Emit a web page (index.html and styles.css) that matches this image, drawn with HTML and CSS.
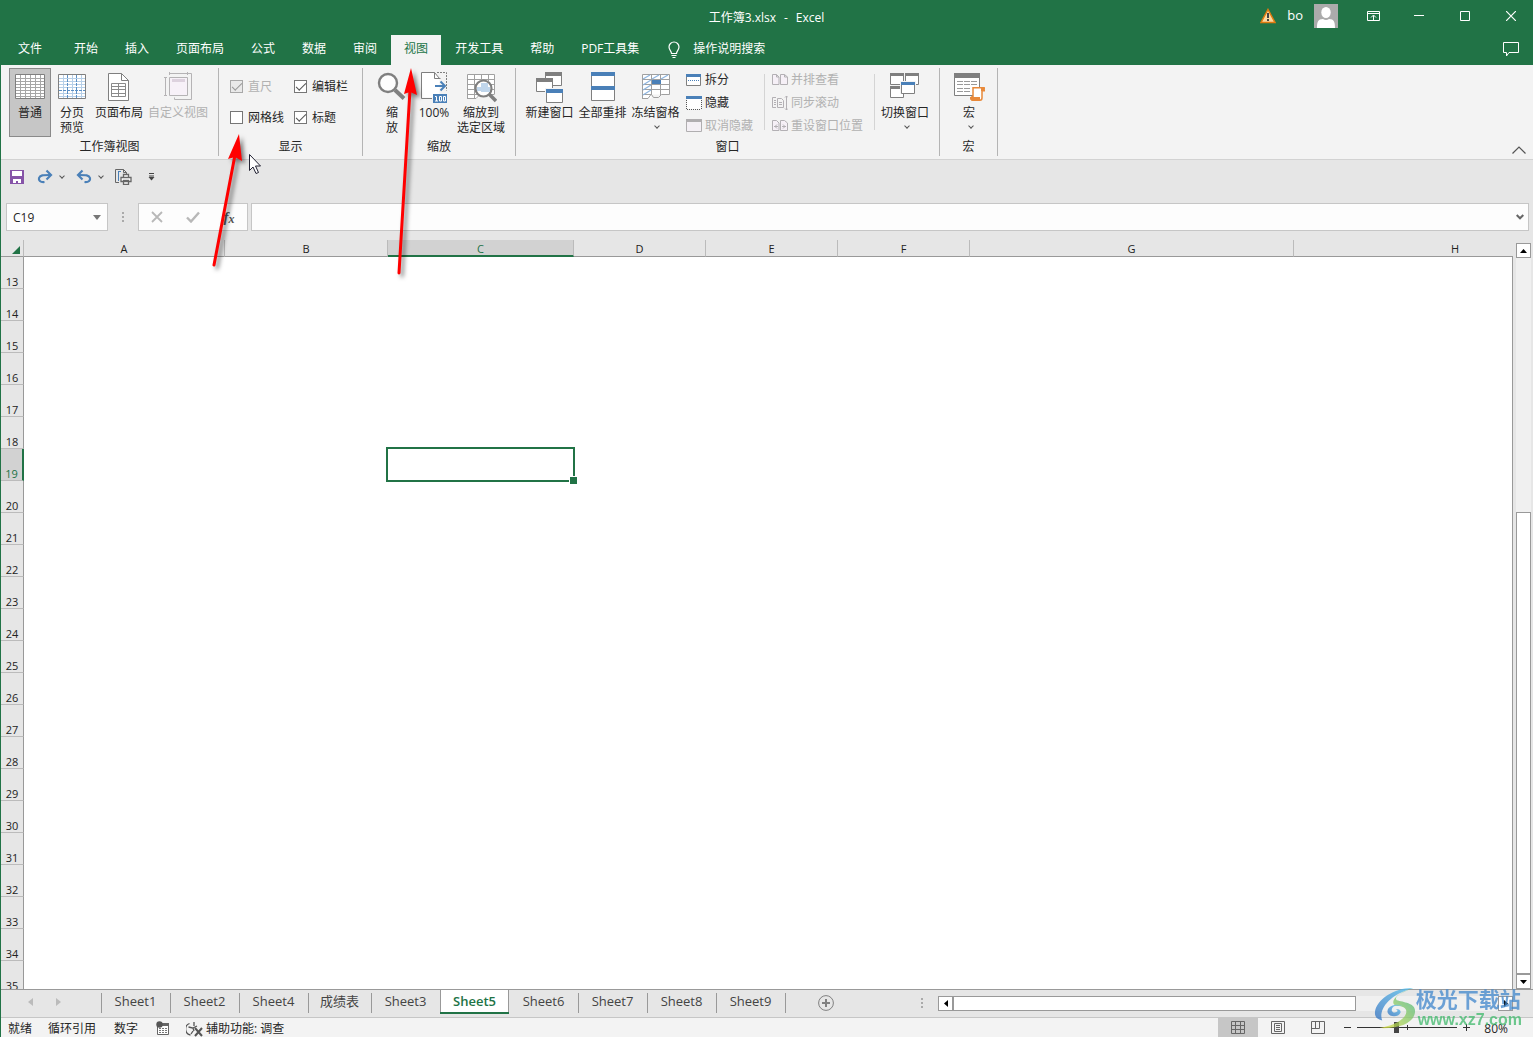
FILE: index.html
```html
<!DOCTYPE html>
<html lang="zh-CN">
<head>
<meta charset="utf-8">
<title>工作簿3.xlsx - Excel</title>
<link rel="stylesheet" href="styles.css">
</head>
<body>
<div class="app">
  <header class="header">
    <div class="titlebar">
      <h1 class="title"><span>工作簿3.xlsx</span><span>-</span><span>Excel</span></h1>
      <div class="account">
        <svg width="16" height="16" viewBox="0 0 16 16"><path d="M8 1.500 15 14.500H1Z" fill="#fbd9a0" stroke="#e07a10" stroke-width="1.500"/><path d="M8 5v5M8 11v2" stroke="#444" stroke-width="2"/></svg>
        <span class="user">bo</span>
        <svg width="24" height="24" viewBox="0 0 24 24"><path fill="#ababab" d="M0 0h24v24H0z"/><ellipse cx="12" cy="8.500" rx="4.700" ry="5.500" fill="#fff"/><path d="M3 24c0-6 1-9 6-9 2 1.300 4 1.300 6 0 5 0 6 3 6 9z" fill="#fff"/></svg>
      </div>
      <div class="winbuttons">
        <button class="winbtn" aria-label="功能区显示选项"><svg width="13" height="10" viewBox="0 0 13 10" fill="none" stroke="#fff"><path d="M.5.5h12v9H.5zM.5 2.500h12M6.500 9V4.500M4 6.500 6.500 4 9 6.500"/></svg></button>
        <button class="winbtn" aria-label="最小化"><svg width="10" height="10" viewBox="0 0 10 10" stroke="#fff"><path d="M0 4.500h10"/></svg></button>
        <button class="winbtn" aria-label="最大化"><svg width="10" height="10" viewBox="0 0 10 10" stroke="#fff" fill="none"><path d="M.5.5h9v9h-9z"/></svg></button>
        <button class="winbtn" aria-label="关闭"><svg width="10" height="10" viewBox="0 0 10 10" stroke="#fff" stroke-width="1.200"><path d="M0 0l10 10M10 0 0 10"/></svg></button>
      </div>
    </div>
    <nav class="tabs">
      <button class="tab tab-file">文件</button>
      <button class="tab">开始</button>
      <button class="tab">插入</button>
      <button class="tab">页面布局</button>
      <button class="tab">公式</button>
      <button class="tab">数据</button>
      <button class="tab">审阅</button>
      <button class="tab tab-active">视图</button>
      <button class="tab">开发工具</button>
      <button class="tab">帮助</button>
      <button class="tab">PDF工具集</button>
      <button class="tab tell-me"><svg width="16" height="18" viewBox="0 0 16 18" fill="none" stroke="#fff" stroke-width="1.200"><path d="M5.500 12.500c0-2.500-2.500-3.500-2.500-6.500a5 5 0 0 1 10 0c0 3-2.500 4-2.500 6.500zM5.500 14.500h5M6.500 16.500h3"/></svg>操作说明搜索</button>
      <button class="comment" aria-label="批注"><svg width="16" height="15" viewBox="0 0 16 15" fill="none" stroke="#fff"><path d="M.5.5h15v10H6L3.500 14v-3.500h-3z"/></svg></button>
    </nav>
  </header>

  <div class="body">
    <section class="ribbon" aria-label="视图">
      <div class="group group-views">
        <div class="controls">
          <button class="big pressed"><svg width="32" height="32" viewBox="0 0 32 32"><path d="M1.500 3.500h29v24h-29z" fill="#fff" stroke="#7f7f7f"/><path d="M2 7.500h28M2 10.500h28M2 13.500h28M2 16.500h28M2 19.500h28M2 22.500h28M2 25.500h28M6.500 4v23M11.500 4v23M16.500 4v23M21.500 4v23M26.500 4v23" stroke="#a6a6a6"/></svg><span>普通</span></button>
          <button class="big"><svg width="32" height="32" viewBox="0 0 32 32"><path d="M2.500 3.500h27v24h-27z" fill="#fff" stroke="#7f7f7f"/><path d="M3 7.500h26M3 10.500h26M3 13.500h26M3 16.500h26M3 22.500h26M3 25.500h26M7.500 4v23M16.500 4v23M25.500 4v23" stroke="#b6cfe8"/><path d="M11.500 4v23M20.500 4v23M3 19.500h26" stroke="#5b8fc4" stroke-dasharray="3 1"/></svg><span>分页<br>预览</span></button>
          <button class="big w-52"><svg width="32" height="32" viewBox="0 0 32 32"><path d="M5.500 2.500h13l7 7v20h-20z" fill="#fff" stroke="#7f7f7f"/><path d="M18.500 2.500v7h7" fill="none" stroke="#7f7f7f"/><path d="M8.500 12.500h14v13h-14zM8.500 15.500h14M8.500 18.500h14M8.500 22.500h14M15.500 12.500v13" fill="none" stroke="#8a8a8a"/></svg><span>页面布局</span></button>
          <button class="big w-66" disabled><svg width="32" height="32" viewBox="0 0 32 32" fill="none" stroke="#b5b3b5"><path d="M7.500 6.500h18v18h-18z" fill="#f7f1f8"/><path d="M10 8h13v3H10z" fill="#ddd2de" stroke="none"/><path d="M7.500 2.500h18M7.500 1v3M25.500 1v3M3.500 6.500v18M2 6.500h3M2 24.500h3M26 2.500h3.500v26H12.500v-2"/></svg><span>自定义视图</span></button>
        </div>
        <h2 class="group-name">工作簿视图</h2>
      </div>
      <div class="group group-show">
        <div class="controls checks">
          <label class="check off"><input type="checkbox" checked disabled>直尺</label>
          <label class="check"><input type="checkbox" checked>编辑栏</label>
          <label class="check"><input type="checkbox">网格线</label>
          <label class="check"><input type="checkbox" checked>标题</label>
        </div>
        <h2 class="group-name">显示</h2>
      </div>
      <div class="group group-zoom">
        <div class="controls">
          <button class="big"><svg width="32" height="32" viewBox="0 0 32 32" fill="none" stroke="#7f7f7f"><path d="m19 19 9 8.500" stroke-width="4"/><circle cx="12" cy="12" r="9" fill="#fdfdfd" stroke-width="2.400"/></svg><span>缩<br>放</span></button>
          <button class="big"><svg width="32" height="32" viewBox="0 0 32 32"><path d="M3.500 1.500h13l5 6v19h-18z" fill="#fff"/><path d="M14 27.500H3.500v-26h13l5 6M16.500 1.500v6h6" fill="none" stroke="#7f7f7f"/><path d="M19 1.500h9.500v18" fill="none" stroke="#7f7f7f" stroke-dasharray="2 1"/><path d="M17 15h10M22.500 10.500 27 15l-4.500 4.500" fill="none" stroke="#4a80b8" stroke-width="2"/><path d="M15 23h14v9H15z" fill="#4a80b8"/><path d="M17 25.500h1.500V30M17 30h3M21.500 25.500h2V30h-2zM25.500 25.500h2V30h-2z" fill="none" stroke="#fff"/></svg><span>100%</span></button>
          <button class="big w-52"><svg width="32" height="32" viewBox="0 0 32 32"><path d="M2.500 3.500h27v19l-10 3h-3l-5 2h-9z" fill="#fff"/><path d="M2.500 27V3.500h27V23M2 27.500h9l3-3M2.500 8.500h27M2.500 13.500h27M2.500 18.500h27M2.500 23.500h27M9.500 4v23M16.500 4v6M23.500 4v6" fill="none" stroke="#a0a0a0"/><path d="m24 23 7 7" stroke="#7f7f7f" stroke-width="3.500"/><circle cx="18.500" cy="17.500" r="8" fill="#fff" stroke="#7f7f7f" stroke-width="2.200"/><path d="M16 12h7v4h2v5h-9v-1h-4v-4h4z" fill="#c0d6ec"/></svg><span>缩放到<br>选定区域</span></button>
        </div>
        <h2 class="group-name">缩放</h2>
      </div>
      <div class="group group-window">
        <div class="controls">
          <button class="big w-53"><svg width="32" height="32" viewBox="0 0 32 32" fill="#fff" stroke="#7f7f7f"><path d="M11.500 1.500h16v13h-16z"/><path d="M11 1h17v4H11z" fill="#7f7f7f" stroke="none"/><path d="M2.500 7.500h16v13h-16z"/><path d="M2 7h17v4H2z" fill="#7f7f7f" stroke="none"/><path d="M11 17h19v15H11z" fill="#f3f3f3" stroke="none"/><path d="M12.500 18.500h16v13h-16z"/><path d="M12 18h17v4H12z" fill="#4a80b8" stroke="none"/></svg><span>新建窗口</span></button>
          <button class="big w-53"><svg width="32" height="32" viewBox="0 0 32 32"><path d="M4.500 1.500h23v28h-23z" fill="#fff" stroke="#7f7f7f"/><path d="M4 1h24v4H4zM4 15h24v4H4z" fill="#4a80b8"/></svg><span>全部重排</span></button>
          <button class="big w-53"><svg width="32" height="32" viewBox="0 0 32 32"><path d="M2.500 3.500h27v20h-18v4h-9z" fill="#fff"/><path d="M2.500 27V3.500h27V23.500h-8l-3 3h-5l-2-3H2M2 27.500h6l3-4M2.500 8.500h27M2.500 13.500h27M2.500 18.500h27M11.500 4v20M20.500 4v20" fill="none" stroke="#a0a0a0"/><path d="m3 8 7-4M12 8l7-4M21 8l7-4M3 14l8-5M3 19l8-5M3 24l8-5" stroke="#8fb6e0" stroke-width="1.300"/><path d="M12 9h9v4h-9z" fill="#4a80b8"/></svg><span>冻结窗格</span><i class="chev"></i></button>
          <div class="stack">
            <button class="small"><svg width="16" height="16" viewBox="0 0 16 16"><path d="M.5 2.500h14v11H.5z" fill="#fff" stroke="#7f7f7f"/><path d="M0 2h15v3H0z" fill="#4a80b8"/><path d="M2 8.500h11" stroke="#4a80b8" stroke-dasharray="1 1"/></svg>拆分</button>
            <button class="small"><svg width="16" height="16" viewBox="0 0 16 16"><path d="M1 2h14v12H1z" fill="#fff"/><path d="M1 14.500h14M.5 5v9M15.500 5v9" stroke="#555" stroke-dasharray="1 1"/><path d="M0 1h16v3H0z" fill="#4a80b8"/></svg>隐藏</button>
            <button class="small" disabled><svg width="16" height="16" viewBox="0 0 16 16"><path d="M.5 1.500h15v12H.5z" fill="#f4f0f5" stroke="#b0aeb0"/><path d="M0 1h16v3H0z" fill="#b0aeb0"/></svg>取消隐藏</button>
          </div>
          <div class="stack stack-sep">
            <button class="small" disabled><svg width="16" height="16" viewBox="0 0 16 16" fill="#f6f0f7" stroke="#b3b0b4"><path d="M.5 2.500h4l2.500 2.500v7.500H.5zM8.500 2.500h4l3 2.500v7.500h-7zM4.500 2.500V5H7M12.500 2.500V5h3"/></svg>并排查看</button>
            <button class="small" disabled><svg width="16" height="16" viewBox="0 0 16 16" fill="none" stroke="#b3b0b4"><path d="M4 2.500H.5v10H4M5.500 3.500h4l2 2v7h-6zM2 5.500h2M2 7.500h2M2 9.500h2M7 7.500h3M7 9.500h3M14.500 1v14M13 2.500l1.500-1.500L16 2.500M13 13.500l1.500 1.500 1.500-1.500"/></svg>同步滚动</button>
            <button class="small" disabled><svg width="16" height="16" viewBox="0 0 16 16" fill="#f6f0f7" stroke="#b3b0b4"><path d="M.5 2.500h4l2.500 2.500v7.500H.5zM8.500 2.500h4l3 2.500v7.500h-7zM2 8.500h4M5 6.500l-2 2 2 2M10 8.500h4M11 6.500l2 2-2 2"/></svg>重设窗口位置</button>
          </div>
          <button class="big w-60"><svg width="32" height="32" viewBox="0 0 32 32" fill="#fff" stroke="#7f7f7f"><path d="M1.500 2.500h13v11h-13zM16.500 2.500h13v11h-13zM1.500 15.500h13v11h-13z"/><path d="M1 2h14v3H1zM16 2h14v3H16zM1 15h14v3H1z" fill="#7f7f7f" stroke="none"/><path d="M11 10h16v13H11z" fill="#f3f3f3" stroke="none"/><path d="M12.500 11.500h13v11h-13z"/><path d="M12 11h14v3H12z" fill="#4a80b8" stroke="none"/></svg><span>切换窗口</span><i class="chev"></i></button>
        </div>
        <h2 class="group-name">窗口</h2>
      </div>
      <div class="group group-macro">
        <div class="controls">
          <button class="big"><svg width="32" height="32" viewBox="0 0 32 32"><path d="M1.500 2.500h25v22h-25z" fill="#fff" stroke="#7f7f7f"/><path d="M1 2h26v5H1z" fill="#7f7f7f"/><path d="M4 10.500h20M4 13.500h20M4 17.500h14M4 20.500h14" stroke="#9a9a9a" stroke-dasharray="6 1"/><path d="M20 16.700h10.500q1.500 0 1.500 1.500v1.500h-3v7q0 2.500-2 2.500h-8v-3.500h1z" fill="#fff" stroke="#e8893a" stroke-width="1.500"/><path d="M17 26h10v3H18q-1 0-1-1.500zM28 16h3l1 4h-4z" fill="#e8893a"/></svg><span>宏</span><i class="chev"></i></button>
        </div>
        <h2 class="group-name">宏</h2>
      </div>
      <button class="collapse" aria-label="折叠功能区"><svg width="14" height="8" viewBox="0 0 14 8" fill="none" stroke="#555" stroke-width="1.200"><path d="M.5 7.500 7 1l6.500 6.500"/></svg></button>
    </section>

    <div class="qat">
      <button class="qbtn" aria-label="保存"><svg width="16" height="16" viewBox="0 0 16 16"><path d="M1 1h14v14H1z" fill="#8654a8"/><path d="M3 2h10v5H3zM4 10h8v4H9v-2H7v2H4z" fill="#fff"/></svg></button>
      <button class="qbtn q-gap" aria-label="恢复"><svg width="16" height="16" viewBox="0 0 16 16" fill="none" stroke="#4a80b8" stroke-width="2.200"><path d="M7.500 13C3 13.500 1.500 11 2 9 3 6 6 6 13 6"/><path d="M9.500 1.500 14 6l-4.500 4.500"/></svg></button>
      <i class="chev"></i>
      <button class="qbtn q-gap" aria-label="撤消"><svg width="16" height="16" viewBox="0 0 16 16" fill="none" stroke="#4a80b8" stroke-width="2.200"><path d="M8.500 13c4.500.5 6-2 5.500-4C13 6 10 6 3 6"/><path d="M6.500 1.500 2 6l4.500 4.500"/></svg></button>
      <i class="chev"></i>
      <button class="qbtn q-gap" aria-label="打印预览"><svg width="17" height="16" viewBox="0 0 17 16" fill="none" stroke="#666"><path d="M4 13.500H.5V.5h8l3 3V6M8.500.5v3h3"/><path d="M3.500 3v9M3 2.500h3" stroke="#4a80b8"/><path d="M8.500 9V5.500h5V9M6 12.500v-4h10v4zM8.500 11.500h5v4h-5z" fill="#fff" stroke-width="1.300"/></svg></button>
      <button class="qbtn q-more" aria-label="自定义快速访问工具栏"><svg width="7" height="8" viewBox="0 0 7 8"><path d="M1 .5h5M1 3h5" stroke="#444"/><path d="M.5 4h6l-3 3.500z" fill="#444"/></svg></button>
    </div>

    <div class="formula">
      <div class="box namebox"><input type="text" value="C19" aria-label="名称框"><svg width="8" height="5" viewBox="0 0 8 5"><path d="M0 0h8L4 5z" fill="#777"/></svg></div>
      <span class="dots"></span>
      <div class="box fxbox">
        <button class="fbtn" aria-label="取消"><svg width="12" height="12" viewBox="0 0 12 12" stroke="#b8b8b8" stroke-width="1.800"><path d="m1 1 10 10M11 1 1 11"/></svg></button>
        <button class="fbtn" aria-label="输入"><svg width="14" height="12" viewBox="0 0 14 12" fill="none" stroke="#b8b8b8" stroke-width="2.400"><path d="m1 6.500 4 4 8-9"/></svg></button>
        <button class="fbtn fx" aria-label="插入函数"><em>f</em><em class="sub">x</em></button>
      </div>
      <div class="box fbox"><input type="text" aria-label="编辑栏"><svg width="8" height="6" viewBox="0 0 8 6" fill="none" stroke="#666" stroke-width="2"><path d="m.7 1 3.300 3.300L7.300 1"/></svg></div>
    </div>

    <main class="sheet">
      <div class="viewport">
        <table class="grid">
          <colgroup><col class="c-head"><col class="c-a"><col class="c-b"><col class="c-c"><col class="c-d"><col class="c-d"><col class="c-d"><col class="c-g"><col></colgroup>
          <thead><tr><th class="corner"><svg width="8" height="8" viewBox="0 0 8 8"><path d="M8 0v8H0z" fill="#217346"/></svg></th><th>A</th><th>B</th><th class="sel">C</th><th>D</th><th>E</th><th>F</th><th>G</th><th class="last">H</th></tr></thead>
          <tbody>
            <tr><th>13</th><td colspan="8"></td></tr>
            <tr><th>14</th><td colspan="8"></td></tr>
            <tr><th>15</th><td colspan="8"></td></tr>
            <tr><th>16</th><td colspan="8"></td></tr>
            <tr><th>17</th><td colspan="8"></td></tr>
            <tr><th>18</th><td colspan="8"></td></tr>
            <tr><th class="sel">19</th><td colspan="2" class="plain"></td><td class="active"><span class="cursor-box"></span></td><td colspan="5"></td></tr>
            <tr><th>20</th><td colspan="8"></td></tr>
            <tr><th>21</th><td colspan="8"></td></tr>
            <tr><th>22</th><td colspan="8"></td></tr>
            <tr><th>23</th><td colspan="8"></td></tr>
            <tr><th>24</th><td colspan="8"></td></tr>
            <tr><th>25</th><td colspan="8"></td></tr>
            <tr><th>26</th><td colspan="8"></td></tr>
            <tr><th>27</th><td colspan="8"></td></tr>
            <tr><th>28</th><td colspan="8"></td></tr>
            <tr><th>29</th><td colspan="8"></td></tr>
            <tr><th>30</th><td colspan="8"></td></tr>
            <tr><th>31</th><td colspan="8"></td></tr>
            <tr><th>32</th><td colspan="8"></td></tr>
            <tr><th>33</th><td colspan="8"></td></tr>
            <tr><th>34</th><td colspan="8"></td></tr>
            <tr><th>35</th><td colspan="8"></td></tr>
          </tbody>
        </table>
      </div>
      <div class="vscroll">
        <button class="arrow" aria-label="向上滚动"><svg width="7" height="4" viewBox="0 0 7 4"><path d="M0 4h7L3.500 0z"/></svg></button>
        <div class="vtrack"><div class="vthumb"></div></div>
        <button class="arrow" aria-label="向下滚动"><svg width="7" height="4" viewBox="0 0 7 4"><path d="M0 0h7L3.500 4z"/></svg></button>
      </div>
    </main>

    <div class="sheetbar">
      <div class="sheetnav">
        <button aria-label="上一个工作表"><svg width="5" height="8" viewBox="0 0 5 8"><path d="M5 0v8L0 4z" fill="#bbb"/></svg></button>
        <button aria-label="下一个工作表"><svg width="5" height="8" viewBox="0 0 5 8"><path d="M0 0v8l5-4z" fill="#bbb"/></svg></button>
      </div>
      <div class="sheets">
        <button class="sh">Sheet1</button>
        <button class="sh">Sheet2</button>
        <button class="sh">Sheet4</button>
        <button class="sh">成绩表</button>
        <button class="sh">Sheet3</button>
        <button class="sh sh-active">Sheet5</button>
        <button class="sh">Sheet6</button>
        <button class="sh">Sheet7</button>
        <button class="sh">Sheet8</button>
        <button class="sh">Sheet9</button>
      </div>
      <button class="add" aria-label="新工作表"><svg width="16" height="16" viewBox="0 0 16 16" fill="none" stroke="#808080"><circle cx="8" cy="8" r="7.400"/><path d="M8 4v8M4 8h8" stroke-width="2"/></svg></button>
      <span class="dots"></span>
      <div class="hscroll">
        <button class="arrow" aria-label="向左滚动"><svg width="4" height="7" viewBox="0 0 4 7"><path d="M4 0v7L0 3.500z"/></svg></button>
        <div class="htrack"><div class="hthumb"></div></div>
        <button class="arrow" aria-label="向右滚动"><svg width="4" height="7" viewBox="0 0 4 7"><path d="M0 0v7l4-3.500z"/></svg></button>
      </div>
    </div>

    <footer class="status">
      <span>就绪</span>
      <span>循环引用</span>
      <span class="s-num">数字</span>
      <svg width="14" height="14" viewBox="0 0 14 14"><path d="M1.500 4v9.500h11v-11H6" fill="#fff" stroke="#666"/><path d="M6 2h7v3H6z" fill="#666"/><path d="M3 7.500h9M3 9.500h9M3 11.500h9" stroke="#777" stroke-dasharray="2 1"/><circle cx="3.500" cy="3.500" r="3.200" fill="#555"/></svg>
      <span class="access"><svg width="17" height="16" viewBox="0 0 17 16" fill="none" stroke="#555" stroke-width="1.300"><path d="M3.500 2.500a6 6 0 0 0 1 11.500M2.500 6l4.500 1L8 10M8 1v4M7 7l4-2M7 10l-2 3"/><path d="m9 7 7 8M16 7l-7 8" stroke-width="2"/></svg>辅助功能: 调查</span>
      <div class="views">
        <button class="view view-on" aria-label="普通"><svg width="14" height="14" viewBox="0 0 14 14" fill="none" stroke="#666"><path d="M.5.5h13v12H.5zM4.500.5v12M9.500.5v12M.5 4.500h13M.5 8.500h13"/></svg></button>
        <button class="view" aria-label="页面布局"><svg width="14" height="14" viewBox="0 0 14 14" fill="none" stroke="#666"><path d="M.5.5h13v12H.5zM3.500 2.500h7v8h-7zM5 4.500h4M5 6.500h4M5 8.500h4"/></svg></button>
        <button class="view" aria-label="分页预览"><svg width="14" height="14" viewBox="0 0 14 14" fill="none" stroke="#666"><path d="M.5.500h13v12H.5zM.5 7.500h8v-7M4.500.5v7"/></svg></button>
      </div>
      <div class="zoom">
        <button aria-label="缩小"><svg width="9" height="9" viewBox="0 0 9 9" stroke="#333"><path d="M1 4.500h7"/></svg></button>
        <input type="range" min="0" max="100" value="39" aria-label="显示比例">
        <button aria-label="放大"><svg width="9" height="9" viewBox="0 0 9 9" stroke="#333"><path d="M1 4.500h7M4.500 1v7"/></svg></button>
        <span class="pct">80%</span>
      </div>
    </footer>
  </div>

  <svg class="note" width="430" height="290" viewBox="0 0 430 290" aria-hidden="true">
    <g class="arrows" fill="#f00" stroke="#f00">
      <path d="M214 265 235 155M399 273 410 90" stroke-width="3" stroke-linecap="round"/>
      <path d="M239 134 242 161 235 157 228 159zM411 68 417 95 410 92 404 94z" stroke="none"/>
    </g>
    <path d="M249.500 154.500v16l3.500-3.500 3 6.500 2.500-1-3-6.500h5z" fill="#fff" stroke="#223"/>
  </svg>

  <div class="mark">
    <svg width="42" height="42" viewBox="0 0 46 44" preserveAspectRatio="none">
      <defs>
        <linearGradient id="sky" x1="0" y1="1" x2="1" y2="0"><stop offset="0" stop-color="#2f6fc0"/><stop offset="1" stop-color="#55c3f0"/></linearGradient>
        <linearGradient id="leaf" x1="0" y1="1" x2="1" y2="0"><stop offset="0" stop-color="#e4e23a"/><stop offset="1" stop-color="#35b28a"/></linearGradient>
      </defs>
      <path d="M43 1C25 0 2 12 1 27c0 5 3 7 8 8C5 26 13 9 43 1z" fill="url(#sky)"/>
      <path d="M43 1c-17 6-21 10-18 13 7 2 20 3 20 11 0 12-16 19-39 18 12-2 26-7 29-15 2-6-4-8-9-8-9-1-7-12 17-19z" fill="url(#leaf)"/>
      <path d="M31 20c-8-4-18 1-16 7 2 5 12 5 14 0 1-3-3-5-6-3 2-1 4 1 2 2-3 2-7 0-5-4 2-3 7-3 11-2z" fill="url(#sky)"/>
    </svg>
    <div class="mark-text"><span class="mark-name">极光下载站</span><span class="mark-url">www.xz7.com</span></div>
  </div>
</div>
</body>
</html>
```

FILE: styles.css
```css
* { box-sizing: border-box; }
html, body { height: 100%; }
body {
  margin: 0;
  font: 12px/16px "Open Sans", "Noto Sans CJK SC", sans-serif;
  color: #262626;
  overflow: hidden;
}
button, input { font: inherit; color: inherit; margin: 0; padding: 0; border: 0; background: none; outline: 0; }
button { white-space: nowrap; }
svg { display: block; flex: none; }
h1, h2 { margin: 0; font-size: 12px; font-weight: 400; }

.app { position: relative; display: flex; flex-direction: column; height: 100vh; }

/* title bar and tabs */
.header { background: #217346; color: #fff; }
.titlebar { display: grid; grid-template-columns: 1fr auto 1fr; align-items: center; height: 35px; padding-bottom: 3px; }
.title { grid-column: 2; display: flex; gap: 8px; line-height: 16px; padding-top: 3px; }
.account { display: flex; align-items: center; justify-content: flex-end; gap: 11px; grid-column: 3; grid-row: 1; margin-right: 195px; }
.user { font-size: 13px; padding-bottom: 2px; }
.winbuttons { display: flex; grid-column: 3; grid-row: 1; justify-self: end; margin-right: -1px; }
.winbtn { display: flex; align-items: center; justify-content: center; width: 46px; height: 32px; }
.tabs { display: flex; gap: 1px; padding-left: 5px; }
.tab { height: 30px; padding: 0 13px 2px; }
.tab-file { margin-right: 5px; }
.tab-active { background: #f3f3f3; color: #217346; }
.tell-me { display: flex; align-items: center; gap: 11px; }
.tell-me svg { margin-top: 2px; }
.comment { margin-left: auto; margin-right: 14px; padding-bottom: 2px; }

.body { display: flex; flex-direction: column; flex: 1; min-height: 0; border-left: 1px solid #217346; background: #e6e6e6; }

/* ribbon */
.ribbon { display: flex; height: 95px; padding-top: 3px; background: #f3f3f3; border-bottom: 1px solid #d2d2d2; }
.group { display: flex; flex-direction: column; height: 88px; border-right: 1px solid #b4b4b4; }
.controls { display: flex; height: 72px; padding-left: 8px; }
.group-name { text-align: center; line-height: 18px; }
.group-views { width: 218px; }
.group-show { width: 144px; }
.group-zoom { width: 153px; }
.group-window { width: 424px; }
.group-window .controls { padding-left: 7px; }
.group-macro { width: 58px; }
.big { display: flex; flex-direction: column; align-items: center; width: 42px; height: 69px; padding-top: 2px; line-height: 15px; border: 1px solid transparent; }
.big span { margin-top: 2px; }
.big .chev { margin-top: 4px; }
.w-52 { width: 52px; }
.w-53 { width: 53px; }
.w-60 { width: 60px; }
.w-66 { width: 66px; }
.pressed { background: #c6c6c6; border-color: #8a8a8a; }
button:disabled, .off { color: #b1b1b1; }
.chev { width: 4px; height: 4px; margin-left: 3px; border: solid #555; border-width: 0 1px 1px 0; transform: rotate(45deg); }
.controls.checks { display: grid; grid-template-columns: 64px 72px; grid-template-rows: 31px 31px; padding: 3px 0 0 11px; }
.check { display: flex; align-items: center; gap: 5px; white-space: nowrap; }
.check input { appearance: none; display: grid; justify-items: center; width: 13px; height: 13px; border: 1px solid #767676; background: #fff; }
.check input:checked::after { content: ""; width: 9px; height: 4px; margin-top: 2px; border: solid #555; border-width: 0 0 1px 1px; transform: rotate(-45deg); }
.check input:disabled { background: #e9e9e9; border-color: #a8a8a8; }
.check input:disabled::after { border-color: #999; }
.stack { display: flex; flex-direction: column; padding-left: 4px; width: 82px; }
.stack-sep { width: 111px; height: 56px; margin-top: 6px; padding-left: 7px; border: solid #d4d4d4; border-width: 0 1px; }
.stack-sep .small:first-child { margin-top: -6px; }
.small { display: flex; align-items: center; gap: 3px; height: 23px; flex: none; }
.collapse { margin: auto 7px 5px auto; }

/* quick access */
.qat { display: flex; align-items: center; height: 34px; padding-left: 8px; }
.q-gap { margin-left: 12px; }
.qat .chev { margin-left: 7px; margin-top: -3px; }
.q-more { margin-left: 16px; }

/* formula bar */
.formula { display: flex; height: 37px; padding: 0 4px 0 5px; margin-top: 9px; }
.box { display: flex; align-items: center; height: 28px; background: #fdfdfd; border: 1px solid #c6c6c6; }
.box input { flex: 1; min-width: 0; padding: 1px 0 0 6px; }
.namebox { width: 102px; padding-right: 6px; }
.dots { width: 2px; height: 11px; margin: 9px 14px 0; background: linear-gradient(#aaa 2px, transparent 2px) 0 0 / 2px 4px; }
.fxbox { width: 110px; margin-right: 3px; }
.fbtn { display: flex; align-items: center; justify-content: center; width: 36px; height: 26px; }
.fx { font: 700 15px/20px "Liberation Serif", serif; color: #555; }
.fx .sub { font-size: 12px; padding-top: 4px; }
.fbox { flex: 1; padding-right: 4px; }

/* sheet */
.sheet { display: flex; flex: 1; min-height: 0; }
.viewport { flex: 1; min-width: 0; overflow: hidden; }
.grid { width: 100%; table-layout: fixed; border-collapse: separate; border-spacing: 0; font-size: 11px; }
.c-head { width: 23px; }
.c-a { width: 201px; }
.c-b { width: 163px; }
.c-c { width: 186px; }
.c-d { width: 132px; }
.c-g { width: 324px; }
.grid th, .grid td { padding: 0; }
.grid th { font-weight: 400; color: #222; }
.grid thead th { height: 17px; line-height: 14px; padding-top: 2px; border-bottom: 1px solid #999; border-right: 1px solid #bbb; }
.grid thead .last { border-right: 0; padding-left: 157px; text-align: left; }
.grid thead .sel { background: #d2d2d2; color: #217346; border-bottom: 2px solid #217346; line-height: 13px; }
.corner svg { margin: 2px 0 0 11px; }
.grid tbody th { height: 32px; vertical-align: bottom; line-height: 12px; border-right: 1px solid #999; border-bottom: 1px solid #bbb; }
.grid tbody .sel { background: #d2d2d2; color: #217346; border-right: 2px solid #217346; }
.grid td { background: #fff; border-right: 1px solid #999; }
.grid td.plain, .grid td.active { border-right: 0; }
.active { position: relative; }
.cursor-box { position: absolute; z-index: 1; inset: -2px -1px -1px -2px; border: 2px solid #217346; }
.cursor-box::after { content: ""; position: absolute; right: -4px; bottom: -4px; width: 7px; height: 7px; background: #217346; border: solid #fff; border-width: 1px 0 0 1px; }

.arrow { display: flex; align-items: center; justify-content: center; width: 15px; height: 15px; flex: none; background: #fff; border: 1px solid #999; }
.vscroll { display: flex; flex-direction: column; width: 20px; padding: 3px 2px 0 3px; }
.vtrack { display: flex; flex-direction: column; flex: 1; width: 15px; background: #f0f0f0; }
.vtrack::before { content: ""; flex: 255; }
.vthumb { flex: 462; background: #fff; border: 1px solid #999; }

/* sheet tabs */
.sheetbar { display: flex; align-items: flex-start; height: 29px; border-top: 1px solid #999; border-bottom: 1px solid #c6c6c6; }
.sheetnav { display: flex; gap: 23px; width: 100px; padding: 8px 0 0 27px; }
.sheets { display: flex; background: linear-gradient(#999, #999) 100% 3px / 1px 20px no-repeat; padding-right: 1px; }
.sh { min-width: 69px; height: 24px; padding: 0 12px 2px; font-size: 13px; color: #444; background: linear-gradient(#999, #999) 0 3px / 1px 20px no-repeat; }
.sh:nth-child(4) { min-width: 63px; }
.sh-active { background: #fff; color: #217346; padding-bottom: 0; border: solid #217346; border-width: 0 0 2px; font-weight: 600; box-shadow: inset 1px 0 #999, inset -1px 0 #999; }
.sh-active + .sh { background: none; }
.add { margin: 5px 0 0 32px; }
.sheetbar .dots { margin: 8px 0 0 auto; }
.hscroll { display: flex; width: 575px; margin: 6px 20px 0 15px; }
.htrack { flex: 1; background: #f0f0f0; }
.hthumb { width: 74%; height: 15px; background: #fff; border: 1px solid #999; }

/* status bar */
.status { display: flex; align-items: center; height: 19px; padding-left: 7px; background: #f3f3f3; gap: 16px; }
.status > span, .pct { padding-top: 2px; }
.s-num { margin: 0 2px; }
.access { display: flex; align-items: center; gap: 3px; }
.views { display: flex; margin-left: auto; }
.view { display: flex; align-items: center; justify-content: center; width: 40px; height: 19px; }
.view-on { background: #c6c6c6; }
.zoom { display: flex; align-items: center; gap: 5px; margin-left: -11px; margin-right: 25px; }
.zoom input { appearance: none; width: 100px; height: 13px; background: linear-gradient(#333, #333) 0 6px / 100px 1px no-repeat, linear-gradient(#333, #333) 50px 4px / 1px 5px no-repeat; }
.zoom input::-webkit-slider-thumb { appearance: none; width: 5px; height: 11px; background: #444; }
.pct { margin-left: 8px; }

/* annotations laid over the window */
.note { position: absolute; left: 0; top: 0; pointer-events: none; }
.arrows { filter: drop-shadow(3px 3px 2px rgba(0, 0, 0, .5)); }
.mark { position: absolute; right: 11px; bottom: 7px; display: flex; align-items: center; opacity: .75; pointer-events: none; }
.mark-text { display: flex; flex-direction: column; }
.mark-name { font: 700 21px/24px "Noto Sans CJK SC", sans-serif; color: #3f86cc; }
.mark-url { padding-left: 2px; font: 700 16px/20px "Liberation Sans", sans-serif; color: #3fb96b; }
```
